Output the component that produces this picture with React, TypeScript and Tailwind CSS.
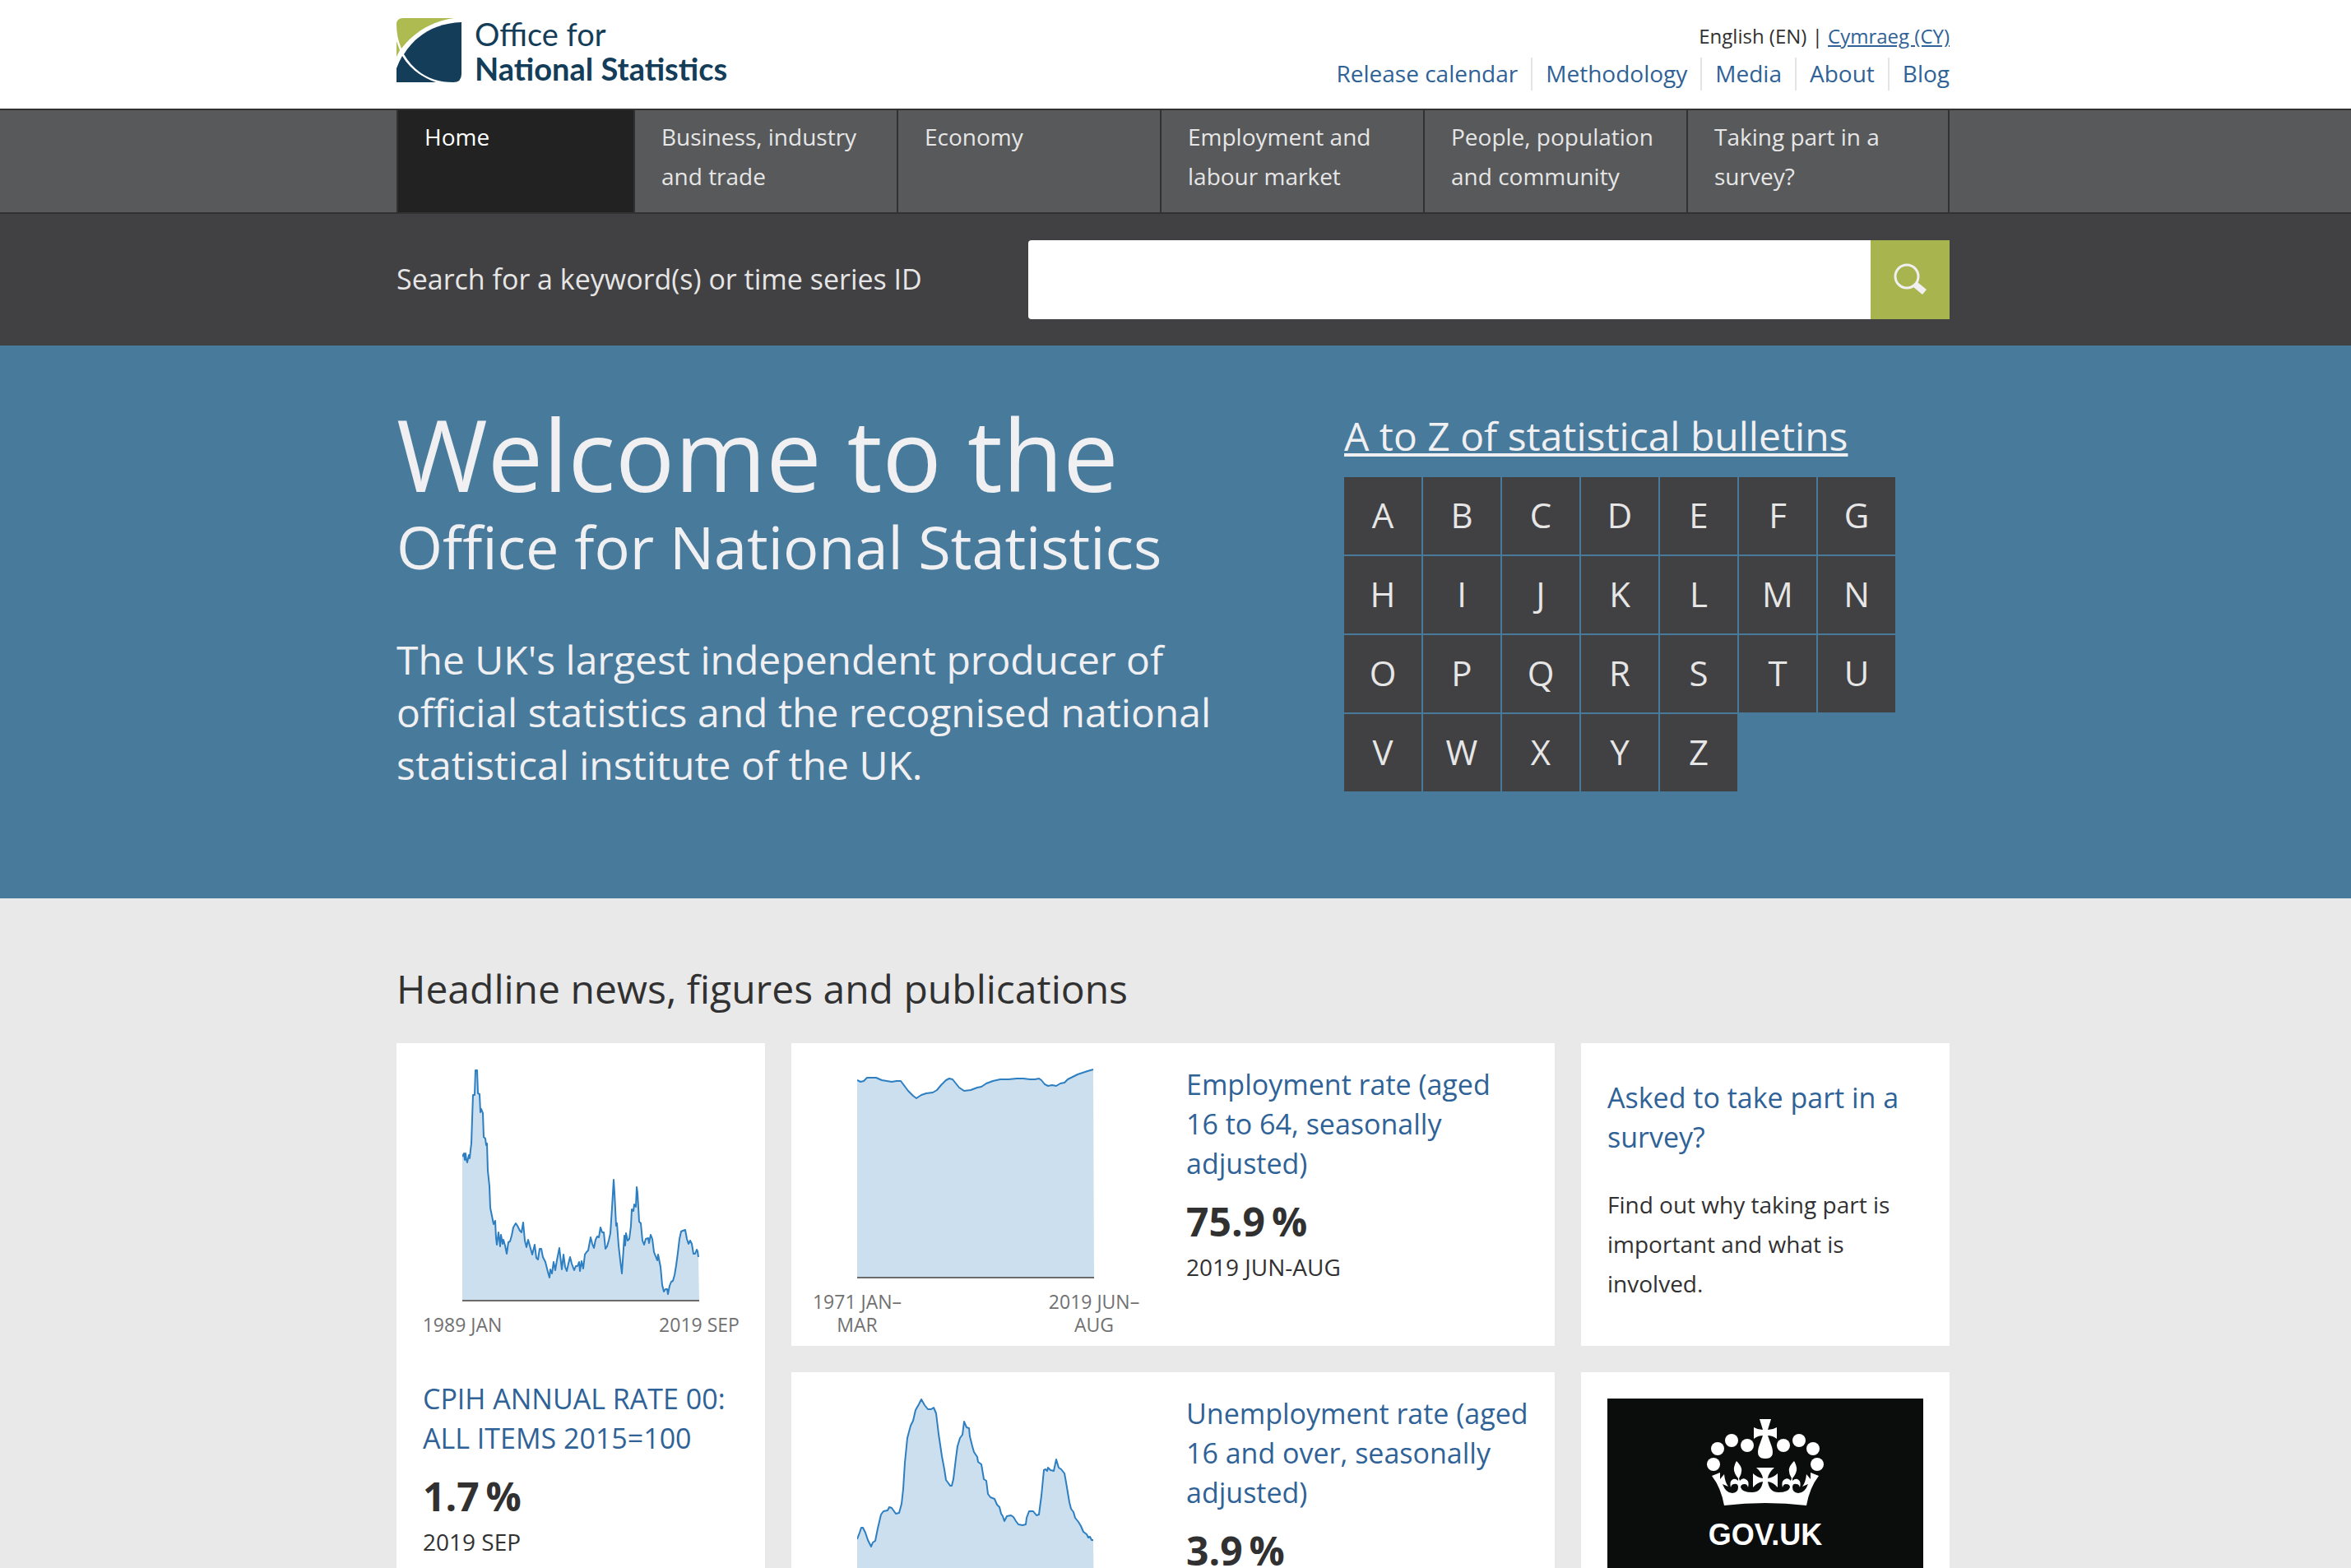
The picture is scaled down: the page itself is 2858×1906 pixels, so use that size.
import React from "react";

const navItems = [
  "Business, industry and trade",
  "Economy",
  "Employment and labour market",
  "People, population and community",
  "Taking part in a survey?",
];

const secondaryLinks = ["Release calendar", "Methodology", "Media", "About", "Blog"];

const letters = "ABCDEFGHIJKLMNOPQRSTUVWXYZ".split("");

const cpihLine =
  "0,106 2,102 3,110 4,102 5,110 6,113 8,104 9,108 10,98 11,90 12,60 13,31 15,31 16,1 18,1 19,29 21,30 22,52 23,48 25,53 26,82 28,84 29,92 30,90 31,123 33,142 34,168 36,178 38,188 40,184 41,205 42,213 44,198 46,215 47,201 49,212 50,207 52,214 54,224 56,210 58,209 60,202 62,192 65,187 67,190 70,196 72,198 74,186 76,208 78,216 80,207 82,214 85,225 88,213 90,229 92,231 94,218 96,218 98,228 101,234 104,246 106,253 107,243 109,248 111,234 113,244 115,232 117,222 118,217 119,226 121,243 123,225 125,240 127,245 129,236 131,228 133,236 136,244 138,239 140,239 142,234 143,245 145,233 147,242 149,225 151,222 153,220 156,204 158,212 160,217 162,207 164,203 166,204 168,192 170,198 172,198 174,218 176,215 178,208 180,199 182,168 184,134 185,150 187,190 188,187 190,214 192,232 194,248 196,218 197,202 198,214 199,199 201,208 203,206 205,190 206,170 208,172 209,164 211,167 212,143 213,150 215,185 217,187 219,208 221,213 223,206 226,205 227,211 229,201 231,206 233,222 235,227 237,232 238,225 241,240 243,262 245,270 247,267 249,267 250,273 252,263 254,258 256,257 258,250 260,238 262,223 264,206 266,197 268,196 271,195 273,206 275,212 277,208 279,212 281,224 283,224 285,219 286,221 287,228";

const employmentLine =
  "0,13 4,15 8,14 12,10 23,10 30,13 36,14 42,15 48,14 53,14 56,18 62,26 68,32 72,35 78,31 84,29 92,28 97,25 102,19 108,13 112,11 116,12 120,17 124,22 130,26 138,25 146,22 151,21 157,17 165,14 174,12 184,12 194,11 202,11 210,12 216,12 221,11 224,13 228,18 232,20 237,19 242,20 247,17 252,16 256,12 262,9 268,6 274,4 280,2 287,0";

const unemploymentLine =
  "0,171 3,163 5,157 7,157 10,163 13,172 17,180 19,175 22,173 25,158 29,141 32,137 37,136 39,132 42,133 47,140 51,139 54,128 56,110 58,78 61,48 65,33 68,27 71,14 75,7 78,1 82,8 86,13 90,13 93,11 96,18 99,43 103,70 106,86 108,99 111,103 113,106 115,106 117,98 120,73 122,58 125,48 128,44 130,28 133,35 136,36 137,46 140,58 142,65 146,71 147,77 151,80 154,98 157,100 159,116 162,120 167,122 170,129 173,132 175,140 177,143 179,149 182,143 187,142 190,144 193,149 196,153 201,154 205,153 206,145 209,137 214,137 218,142 221,141 224,118 227,87 229,86 231,88 232,84 235,87 239,88 242,74 245,84 248,86 252,91 254,102 258,126 260,134 263,138 265,145 269,150 272,155 275,162 279,165 281,169 283,168 285,172 287,172";

function AreaChart({
  line,
  height,
  from,
  to,
  title,
}: {
  line: string;
  height: number;
  from: string;
  to: string;
  title: string;
}) {
  return (
    <div className="flex w-[384px] max-w-full flex-col items-center">
      <svg
        role="img"
        aria-label={title}
        width="288"
        height={height + 4}
        viewBox={`0 -2 288 ${height + 4}`}
      >
        <polygon points={`0,${height} ${line} 288,${height}`} fill="#ccdfee" />
        <polyline points={line} fill="none" stroke="#2d7fc1" strokeWidth="2" strokeLinejoin="round" />
        <rect x="0" y={height - 2} width="288" height="2" fill="#6b6b6b" />
      </svg>
      <div className="mt-3 flex w-full justify-between text-center text-[23px] leading-7 text-[#707071]">
        <span className="w-24 shrink-0">
          <span className="-mx-4 block">{from}</span>
        </span>
        <span className="w-24 shrink-0">
          <span className="-mx-4 block">{to}</span>
        </span>
      </div>
    </div>
  );
}

function Figure({ title, value, date }: { title: string; value: string; date: string }) {
  return (
    <div>
      <h3 className="text-[34px] leading-[48px]">
        <a href="#" className="text-[#2f6296]">
          {title}
        </a>
      </h3>
      <p className="mt-4 text-5xl leading-[62px] font-bold">
        {value}
        <span className="ml-2">%</span>
      </p>
      <p className="text-[28px] leading-[48px]">{date}</p>
    </div>
  );
}

function Logo() {
  return (
    <a href="#" className="flex items-start gap-4 text-[#143d59]">
      <svg width="79" height="78" viewBox="0 0 79 78" aria-hidden="true">
        <path d="M0 8Q0 0 8 0H70C42 4 20 18 6 37C2 28 0 18 0 8Z" fill="#adbb50" />
        <path d="M0 28L4 39L0 47Z" fill="#adbb50" />
        <path d="M79 5V68Q79 78 69 78C42 78 22 66 9 44C24 20 48 6 79 5Z" fill="#143d59" />
        <path d="M0 61Q3 53 7 46C16 61 30 72 48 78H0Z" fill="#143d59" />
      </svg>
      <span className="-mt-0.5 block font-['Lato',sans-serif] text-[38px] leading-[42px]">
        Office for
        <br />
        <span className="font-bold">National Statistics</span>
      </span>
    </a>
  );
}

function Crown() {
  return (
    <svg width="144" height="108" viewBox="0 0 144 108" fill="#fff" aria-hidden="true">
      <circle cx="9" cy="56" r="8" />
      <circle cx="14" cy="37" r="8" />
      <circle cx="31" cy="27" r="8" />
      <circle cx="50" cy="33" r="8" />
      <circle cx="94" cy="33" r="8" />
      <circle cx="113" cy="27" r="8" />
      <circle cx="130" cy="37" r="8" />
      <circle cx="135" cy="56" r="8" />
      <path d="M65 1H79L75 14Q81 14 86 11V25Q81 21 75 21L80 35Q84 49 72 49Q60 49 64 35L69 21Q63 21 58 25V11Q63 14 69 14Z" />
      <path d="M7 70L17 66V74L22 68Q23 78 27 83L20 80Q24 91 32 91Q39 90 39 84Q39 79 34 80Q31 80 30 84Q28 76 33 74Q36 73 39 76L39 73Q33 66 34 60Q35 55 37 52Q42 57 43 61Q44 67 40 73L41 76Q44 72 48 74Q53 76 51 84Q50 80 47 80Q42 80 42 84Q44 90 56 90Q67 90 69 77Q62 78 57 84V67Q62 72 69 73Q68 66 61 60H83Q76 66 75 73Q82 72 87 67V84Q82 78 75 77Q77 90 88 90Q100 90 102 84Q102 80 97 80Q94 80 93 84Q91 76 96 74Q100 72 103 76L104 73Q100 67 101 61Q102 57 107 52Q109 55 110 60Q111 66 105 73L105 76Q108 73 111 74Q116 76 114 84Q113 80 110 80Q105 79 105 84Q105 90 112 91Q120 91 124 80L117 83Q121 78 122 68L127 74V66L137 70Q126 84 122 106Q72 100 22 106Q18 84 7 70Z" />
    </svg>
  );
}

export default function App() {
  return (
    <div className="min-h-screen bg-[#e9e9e9] font-['Open_Sans',sans-serif] text-[#323132]">
      <header>
        <div className="bg-white pr-1.5">
          <div className="mx-auto flex max-w-[1888px] justify-between pb-[22px]">
            <div className="pt-[22px]">
              <Logo />
            </div>
            <div className="flex flex-col items-end pt-6">
              <p className="text-2xl leading-10">
                English (EN) |{" "}
                <a href="#" className="text-[#2f6296] underline">
                  Cymraeg (CY)
                </a>
              </p>
              <ul className="mt-1.5 flex divide-x-2 divide-[#e4e4e4] text-[28px]">
                {secondaryLinks.map((label) => (
                  <li key={label} className="px-4 pb-0.5 leading-[38px] last:pr-0">
                    <a href="#" className="text-[#2f6296]">
                      {label}
                    </a>
                  </li>
                ))}
              </ul>
            </div>
          </div>
        </div>
        <nav className="border-y-2 border-[#323132] bg-[#58595b] pr-1.5">
          <ul className="mx-auto grid max-w-[1888px] grid-cols-[290fr_320fr_320fr_320fr_320fr_318fr] text-[28px] leading-[48px] text-[#e6e6e6]">
            <li className="border-x-2 border-[#323132] bg-[#222] pt-2 pr-2 pb-5 pl-8 text-white">
              <a href="#">Home</a>
            </li>
            {navItems.map((label) => (
              <li key={label} className="border-r-2 border-[#323132] pt-2 pr-2 pb-5 pl-8">
                <a href="#">{label}</a>
              </li>
            ))}
          </ul>
        </nav>
        <div className="bg-[#414042] py-8 pr-1.5">
          <form className="mx-auto flex max-w-[1888px] items-center" onSubmit={(e) => e.preventDefault()}>
            <label htmlFor="search" className="w-[768px] pb-0.5 text-[34px] leading-[48px] text-[#e6e6e6]">
              Search for a keyword(s) or time series ID
            </label>
            <input
              id="search"
              type="search"
              className="h-24 min-w-0 flex-1 rounded-l-sm bg-white px-6 text-[34px] text-[#323132] outline-none"
            />
            <button
              type="submit"
              aria-label="Search"
              className="flex h-24 w-24 items-center justify-center bg-[#a8b54e] pb-0.5"
            >
              <svg width="40" height="40" viewBox="0 0 40 40" aria-hidden="true">
                <circle cx="16" cy="17" r="14" fill="none" stroke="#f0f0f2" strokeWidth="3" />
                <path d="M24 30L29 24L40 33L35 39Z" fill="#f0f0f2" />
              </svg>
            </button>
          </form>
        </div>
      </header>

      <section className="bg-[#487a9c] pr-1.5 text-[#f0f0f2]">
        <div className="mx-auto flex max-w-[1888px] pb-[130px]">
          <div className="w-[1152px] pt-[76px]">
            <h1>
              <span className="block text-[120px] leading-[112px]">Welcome to the</span>
              <span className="block text-[72px] leading-[112px]">Office for National Statistics</span>
            </h1>
            <p className="mt-[50px] max-w-[1040px] text-5xl leading-[64px]">
              The UK's largest independent producer of official statistics and the recognised national
              statistical institute of the UK.
            </p>
          </div>
          <div className="pt-[78px]">
            <h2 className="text-5xl leading-[64px]">
              <a href="#" className="underline">
                A to Z of statistical bulletins
              </a>
            </h2>
            <ol className="mt-[18px] grid grid-cols-7 gap-0.5">
              {letters.map((letter) => (
                <li key={letter}>
                  <a
                    href="#"
                    className="flex size-[94px] items-center justify-center bg-[#414042] pb-1 text-[42px] text-[#e6e6e6]"
                  >
                    {letter}
                  </a>
                </li>
              ))}
            </ol>
          </div>
        </div>
      </section>

      <main className="pt-[78px] pr-1.5 pb-20">
        <div className="mx-auto max-w-[1888px]">
          <h2 className="text-5xl leading-[64px]">Headline news, figures and publications</h2>
          <div className="mt-[34px] grid grid-cols-[448fr_928fr_448fr] gap-8">
            <article className="bg-white px-8 pt-[30px] pb-8">
              <AreaChart
                line={cpihLine}
                height={282}
                from="1989 JAN"
                to="2019 SEP"
                title="CPIH annual rate, 1989 to 2019"
              />
              <div className="mt-[52px]">
                <Figure title="CPIH ANNUAL RATE 00: ALL ITEMS 2015=100" value="1.7" date="2019 SEP" />
              </div>
            </article>
            <div className="flex flex-col gap-8">
              <article className="flex min-h-[368px] gap-16 bg-white px-8">
                <div className="pt-[30px]">
                  <AreaChart
                    line={employmentLine}
                    height={254}
                    from="1971 JAN–MAR"
                    to="2019 JUN–AUG"
                    title="Employment rate, 1971 to 2019"
                  />
                </div>
                <div className="min-w-0 flex-1 pt-[26px]">
                  <Figure
                    title="Employment rate (aged 16 to 64, seasonally adjusted)"
                    value="75.9"
                    date="2019 JUN-AUG"
                  />
                </div>
              </article>
              <article className="flex min-h-[368px] gap-16 bg-white px-8">
                <div className="pt-[30px]">
                  <AreaChart
                    line={unemploymentLine}
                    height={254}
                    from="1971 JAN–MAR"
                    to="2019 JUN–AUG"
                    title="Unemployment rate, 1971 to 2019"
                  />
                </div>
                <div className="min-w-0 flex-1 pt-[26px]">
                  <Figure
                    title="Unemployment rate (aged 16 and over, seasonally adjusted)"
                    value="3.9"
                    date="2019 JUN-AUG"
                  />
                </div>
              </article>
            </div>
            <div className="flex flex-col gap-8">
              <article className="min-h-[368px] bg-white px-8 pt-[42px]">
                <h3 className="text-[34px] leading-[48px]">
                  <a href="#" className="text-[#2f6296]">
                    Asked to take part in a survey?
                  </a>
                </h3>
                <p className="mt-[34px] text-[28px] leading-[48px]">
                  Find out why taking part is important and what is involved.
                </p>
              </article>
              <article className="min-h-[368px] bg-white p-8">
                <a href="#" className="flex flex-col items-center bg-[#0b0c0c] pt-6 pb-12 text-white">
                  <Crown />
                  <span className="mt-2.5 font-['Liberation_Sans',sans-serif] text-4xl leading-[48px] font-bold">
                    GOV.UK
                  </span>
                </a>
              </article>
            </div>
          </div>
        </div>
      </main>
    </div>
  );
}
